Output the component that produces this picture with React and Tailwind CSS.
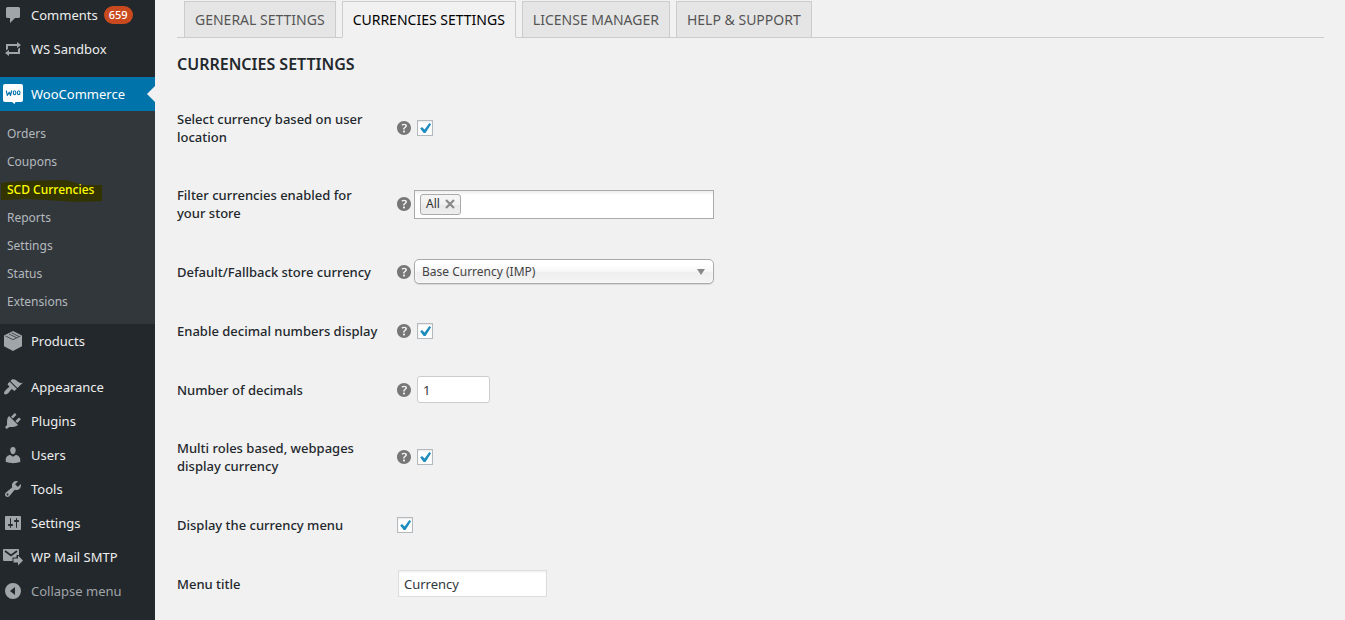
import { useState } from "react";

function Icon({ children, className = "size-5" }) {
  return (
    <svg viewBox="0 0 20 20" aria-hidden="true" fill="currentColor" className={className + " shrink-0"}>
      {children}
    </svg>
  );
}

const icons = {
  comments: <path d="M4.500 2h11a1.500 1.500 0 0 1 1.500 1.500v8a1.500 1.500 0 0 1-1.500 1.500H12l-5 5v-5H4.500A1.500 1.500 0 0 1 3 11.500v-8A1.500 1.500 0 0 1 4.500 2z" />,
  repeat: <path d="M5 7v3l-2 1.500V5h11V3l4 3.010L14 9V7H5zm10 6v-3l2-1.500V15H6v2l-4-3.010L6 11v2h9z" />,
  woo: (
    <>
      <path d="M2 0h16a2 2 0 0 1 2 2v14a2 2 0 0 1-2 2h-5.500l-1 2-2.500-2H2a2 2 0 0 1-2-2V2a2 2 0 0 1 2-2z" />
      <path
        d="M3.300 6.500l1 5 1.900-3.300 1.300 3.300 1.200-5"
        fill="none"
        stroke="#0073aa"
        strokeWidth="1.200"
        strokeLinejoin="round"
      />
      <ellipse cx="11.600" cy="8.700" rx="1.300" ry="2" fill="none" stroke="#0073aa" strokeWidth="1.100" />
      <ellipse cx="15.700" cy="8.700" rx="1.300" ry="2" fill="none" stroke="#0073aa" strokeWidth="1.100" />
    </>
  ),
  products: (
    <>
      <path d="M10 0l9 4.500v10.800L10 20l-9-4.700V4.500z" />
      <path d="M2.500 5L10 8.700 17.500 5M6 3l7.500 3.700M8.500 1.800L16 5.500" fill="none" stroke="#23282d" strokeWidth="0.700" />
    </>
  ),
  appearance: (
    <path d="M14.480 11.060L7.410 3.990l1.500-1.500c.5-.56 2.300-.47 3.510.32 1.210.8 1.430 1.280 2.910 2.100 1.180.64 2.450 1.260 4.450.85zm-.71.71L6.700 4.700 4.930 6.470c-.39.39-.39 1.020 0 1.410l1.060 1.060c.39.39.39 1.030 0 1.420-.6.6-1.430 1.110-2.210 1.690-.35.26-.7.53-1.010.84C1.430 14.230.4 16.080 1.400 17.070c.99 1 2.840-.03 4.180-1.360.31-.31.58-.66.85-1.020.57-.78 1.080-1.610 1.690-2.210.39-.39 1.020-.39 1.410 0l1.060 1.060c.39.39 1.020.39 1.410 0z" />
  ),
  plugins: (
    <path d="M13.110 4.360L9.870 7.600 8 5.730l3.240-3.240c.35-.34 1.050-.2 1.560.32.52.51.66 1.210.31 1.550zm-8 1.770l.91-1.120 9.010 9.010-1.190.84c-.71.71-2.630 1.160-3.820 1.160H6.140L4.900 17.260c-.59.59-1.540.59-2.120 0-.59-.58-.59-1.530 0-2.120l1.240-1.240v-3.880c0-1.130.4-3.190 1.090-3.890zm7.260 3.970l3.240-3.240c.34-.35 1.040-.21 1.550.31.52.51.66 1.210.31 1.550l-3.240 3.250z" />
  ),
  users: (
    <path d="M10 9.250c-2.270 0-2.730-3.440-2.730-3.440C7 4.020 7.820 2 9.970 2c2.160 0 2.980 2.020 2.710 3.810 0 0-.41 3.440-2.680 3.440zm0 2.570L12.720 10c2.390 0 4.520 2.330 4.520 4.530v2.490s-3.650 1.130-7.240 1.130c-3.650 0-7.240-1.130-7.240-1.130v-2.490c0-2.250 1.940-4.480 4.470-4.480z" />
  ),
  tools: (
    <path d="M16.680 9.770c-1.340 1.340-3.300 1.670-4.950.99l-5.410 6.520c-.99.99-2.590.99-3.580 0s-.99-2.590 0-3.570l6.520-5.420c-.68-1.650-.35-3.610.99-4.950 1.280-1.280 3.120-1.620 4.720-1.060l-2.890 2.890 2.820 2.820 2.860-2.870c.53 1.580.18 3.390-1.080 4.650zM3.810 16.210c.4.39 1.040.39 1.430 0 .4-.4.4-1.040 0-1.430-.39-.4-1.030-.4-1.430 0-.39.39-.39 1.030 0 1.430z" />
  ),
  settings: (
    <path d="M18 16V4c0-.55-.45-1-1-1H3c-.55 0-1 .45-1 1v12c0 .55.45 1 1 1h14c.55 0 1-.45 1-1zM8 11h1c.55 0 1 .45 1 1s-.45 1-1 1H8v1.500c0 .28-.22.5-.5.5s-.5-.22-.5-.5V13H6c-.55 0-1-.45-1-1s.45-1 1-1h1V5.500c0-.28.22-.5.5-.5s.5.22.5.5V11zm5-2h-1c-.55 0-1-.45-1-1s.45-1 1-1h1V5.500c0-.28.22-.5.5-.5s.5.22.5.5V7h1c.55 0 1 .45 1 1s-.45 1-1 1h-1v5.500c0 .28-.22.5-.5.5s-.5-.22-.5-.5V9z" />
  ),
  mail: (
    <>
      <path d="M1 2h14a1 1 0 0 1 1 1v5h-2.500v2.500H9.500V14H1a1 1 0 0 1-1-1V3a1 1 0 0 1 1-1z" />
      <path d="M2 4l6 4.500L14 4" fill="none" stroke="#23282d" strokeWidth="1.700" />
      <path d="M10.500 11.500H15V8.500l5 5-5 5v-3h-4.500z" />
    </>
  ),
  collapse: <path fillRule="evenodd" d="M10 2a8 8 0 1 1 0 16 8 8 0 0 1 0-16zM7 10l5 4V6z" />,
};

function MenuItem({ icon, label, badge, active }) {
  return (
    <a
      href="#"
      aria-current={active ? "page" : undefined}
      className={
        "relative flex h-[34px] items-center gap-2 pl-[3px] text-[13px] " +
        (active ? "bg-[#0073aa] text-white" : "text-[#eee]")
      }
    >
      <span className={active ? "flex text-white" : "flex text-[#a0a5aa]"}>
        <Icon>{icons[icon]}</Icon>
      </span>
      <span className="pt-0.5">{label}</span>
      {badge && (
        <span className="-ml-0.5 rounded-full bg-[#ca4a1f] px-[5px] text-[11px] leading-[18px] font-medium text-white">
          {badge}
        </span>
      )}
      {active && (
        <svg viewBox="0 0 8 16" aria-hidden="true" className="absolute right-0 h-4 w-2 fill-[#f1f1f1]">
          <path d="M8 0v16L0 8z" />
        </svg>
      )}
    </a>
  );
}

function SubItem({ label, highlighted }) {
  return (
    <a
      href="#"
      className={
        "relative isolate flex h-7 items-center pl-[7px] text-xs " +
        (highlighted ? "font-medium text-[#ffff00]" : "text-[#b4b9be]")
      }
    >
      {highlighted && (
        <svg viewBox="0 0 101 22" aria-hidden="true" className="absolute top-1 left-px -z-10 h-[22px] w-[101px] fill-[#333300]">
          <path d="M0 3l8-1 12-1 45-1 10 3 8 2h18v16l-24 1-32-2-20-1-25 1z" />
        </svg>
      )}
      {label}
    </a>
  );
}

function Sidebar() {
  return (
    <nav aria-label="Admin menu" className="-mt-0.5 w-[155px] shrink-0 bg-[#23282d]">
      <MenuItem icon="comments" label="Comments" badge="659" />
      <MenuItem icon="repeat" label="WS Sandbox" />
      <div className="mt-[11px]">
        <MenuItem icon="woo" label="WooCommerce" active />
      </div>
      <div className="bg-[#32373c] pt-[9px] pb-2">
        <SubItem label="Orders" />
        <SubItem label="Coupons" />
        <SubItem label="SCD Currencies" highlighted />
        <SubItem label="Reports" />
        <SubItem label="Settings" />
        <SubItem label="Status" />
        <SubItem label="Extensions" />
      </div>
      <MenuItem icon="products" label="Products" />
      <div className="mt-3">
        <MenuItem icon="appearance" label="Appearance" />
        <MenuItem icon="plugins" label="Plugins" />
        <MenuItem icon="users" label="Users" />
        <MenuItem icon="tools" label="Tools" />
        <MenuItem icon="settings" label="Settings" />
        <MenuItem icon="mail" label="WP Mail SMTP" />
        <button type="button" className="flex h-[34px] w-full items-center gap-2 pl-[3px] text-[13px] text-[#a0a5aa]">
          <Icon>{icons.collapse}</Icon>
          <span className="pt-0.5">Collapse menu</span>
        </button>
      </div>
    </nav>
  );
}

function Tab({ label, active }) {
  return (
    <a
      href="#"
      aria-current={active ? "page" : undefined}
      className={
        "border border-[#ccc] px-2.5 pt-px text-sm leading-[34px] " +
        (active
          ? "-mb-px border-b-[#f1f1f1] bg-[#f1f1f1] text-black"
          : "border-b-0 bg-[#e5e5e5] text-[#555]")
      }
    >
      {label}
    </a>
  );
}

function Help() {
  return (
    <button type="button" aria-label="Help" className="text-[#777]">
      <Icon>
        <path d="M17 10c0-3.870-3.140-7-7-7-3.870 0-7 3.130-7 7s3.130 7 7 7c3.860 0 7-3.130 7-7zm-6.300 1.480H9.140v-.43c0-.38.08-.7.24-.98s.46-.57.88-.89c.41-.29.68-.53.81-.71.14-.18.2-.39.2-.62 0-.25-.09-.44-.28-.58-.19-.13-.45-.19-.79-.19-.58 0-1.250.19-2 .57l-.64-1.280c.87-.49 1.800-.74 2.770-.74.81 0 1.450.2 1.920.58.48.39.71.91.71 1.550 0 .43-.09.8-.29 1.110-.19.32-.57.67-1.110 1.060-.38.28-.61.49-.71.63-.1.15-.15.34-.15.57v.35zm-1.470 2.740c-.18-.17-.27-.42-.27-.73 0-.33.08-.58.26-.75s.43-.25.77-.25c.32 0 .57.09.75.26s.27.42.27.74c0 .3-.09.55-.27.72-.18.18-.43.27-.75.27-.33 0-.58-.09-.76-.26z" />
      </Icon>
    </button>
  );
}

function Row({ id, label, help, children }) {
  return (
    <div className="flex min-h-[59px] items-center">
      <div className="w-[217px] shrink-0 pr-3">
        <label htmlFor={id} className="block py-5 text-[13px] leading-[18px] font-medium text-[#23282d]">
          {label}
        </label>
      </div>
      <div className="flex items-center">
        {help && <Help />}
        {children}
      </div>
    </div>
  );
}

function Checkbox({ id }) {
  return (
    <span className="ml-[3px] grid size-4">
      <input
        id={id}
        type="checkbox"
        defaultChecked
        className="peer col-start-1 row-start-1 size-4 appearance-none border border-[#b4b9be] bg-white shadow-[inset_0_1px_2px_rgba(0,0,0,0.1)]"
      />
      <svg
        viewBox="0 0 16 16"
        aria-hidden="true"
        className="pointer-events-none invisible col-start-1 row-start-1 size-4 fill-[#1e8cbe] peer-checked:visible"
      >
        <path d="M12.300 3l1.800 1.200-5.600 8.800H6.700L3.200 8.400 5 6.900l2.600 2.600z" />
      </svg>
    </span>
  );
}

export default function App() {
  const [chips, setChips] = useState(["All"]);
  return (
    <div className="flex min-h-screen overflow-hidden bg-[#f1f1f1] font-['Noto_Sans','Open_Sans',sans-serif]">
      <Sidebar />
      <main className="min-w-0 flex-1 pr-[21px] pl-[22px]">
        <nav aria-label="Settings sections" className="mt-px flex gap-1.5 border-b border-[#ccc] pl-[7px]">
          <Tab label="GENERAL SETTINGS" />
          <Tab label="CURRENCIES SETTINGS" active />
          <Tab label="LICENSE MANAGER" />
          <Tab label="HELP & SUPPORT" />
        </nav>
        <h2 className="mt-3.5 text-base leading-6 font-semibold text-[#23282d]">CURRENCIES SETTINGS</h2>
        <form className="mt-3.5" onSubmit={(e) => e.preventDefault()}>
          <Row id="location" label="Select currency based on user location" help>
            <Checkbox id="location" />
          </Row>
          <Row id="filter" label="Filter currencies enabled for your store" help>
            <div className="flex h-[29px] w-[300px] items-center border border-[#aaa] bg-[linear-gradient(#eee_1%,#fff_15%)] pl-[5px]">
              {chips.map((chip) => (
                <span
                  key={chip}
                  className="flex h-[21px] items-center gap-[5px] rounded-[3px] border border-[#aaa] bg-[linear-gradient(#f4f4f4_20%,#f0f0f0_50%,#e8e8e8_52%,#eee)] px-[5px] text-xs text-[#333]"
                >
                  {chip}
                  <button type="button" aria-label={"Remove " + chip} onClick={() => setChips([])}>
                    <svg viewBox="0 0 10 10" className="size-2.5 stroke-[#888]" fill="none" strokeWidth="2.200">
                      <path d="M1 1l8 8M9 1L1 9" />
                    </svg>
                  </button>
                </span>
              ))}
              <input id="filter" type="text" className="h-full min-w-0 flex-1 bg-transparent px-1 text-xs outline-none" />
            </div>
          </Row>
          <Row id="base" label="Default/Fallback store currency" help>
            <div className="grid w-[300px] items-center">
              <select
                id="base"
                className="col-start-1 row-start-1 h-[25px] appearance-none rounded-[5px] border border-[#aaa] bg-[linear-gradient(#fff_20%,#f6f6f6_50%,#eee_52%,#f4f4f4)] pl-[7px] text-xs text-[#444] shadow-[inset_0_0_3px_#fff,0_1px_1px_rgba(0,0,0,0.1)]"
              >
                <option>Base Currency (IMP)</option>
              </select>
              <svg
                viewBox="0 0 8 6"
                aria-hidden="true"
                className="pointer-events-none col-start-1 row-start-1 mr-[9px] h-1.5 w-2 justify-self-end fill-[#888]"
              >
                <path d="M0 0h8L4 6z" />
              </svg>
            </div>
          </Row>
          <Row id="decimals" label="Enable decimal numbers display" help>
            <Checkbox id="decimals" />
          </Row>
          <Row id="count" label="Number of decimals" help>
            <input
              id="count"
              type="text"
              inputMode="numeric"
              defaultValue="1"
              className="ml-[3px] h-[27px] w-[73px] rounded-[3px] border border-[#ccc] bg-white px-[5px] text-[13px] text-[#32373c]"
            />
          </Row>
          <Row id="roles" label="Multi roles based, webpages display currency" help>
            <Checkbox id="roles" />
          </Row>
          <Row id="menu" label="Display the currency menu">
            <Checkbox id="menu" />
          </Row>
          <Row id="title" label="Menu title">
            <input
              id="title"
              type="text"
              defaultValue="Currency"
              className="ml-1 h-[27px] w-[149px] border border-[#ddd] bg-white px-[5px] text-[13px] text-[#32373c] shadow-[inset_0_1px_2px_rgba(0,0,0,0.07)]"
            />
          </Row>
        </form>
      </main>
    </div>
  );
}
